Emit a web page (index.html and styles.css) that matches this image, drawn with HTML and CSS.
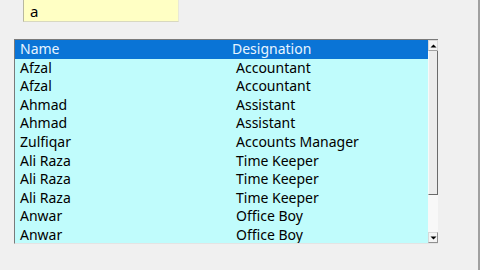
FILE: index.html
```html
<!DOCTYPE html>
<html>
<head>
<meta charset="utf-8">
<link rel="stylesheet" href="styles.css">
</head>
<body>
<div class="window">
  <div class="top">
    <div class="search">a</div>
  </div>
  <div class="listbox">
    <div class="list">
      <div class="row head"><span class="c1">Name</span><span class="c2">Designation</span></div>
      <div class="row"><span class="c1">Afzal</span><span class="c2">Accountant</span></div>
      <div class="row"><span class="c1">Afzal</span><span class="c2">Accountant</span></div>
      <div class="row"><span class="c1">Ahmad</span><span class="c2">Assistant</span></div>
      <div class="row"><span class="c1">Ahmad</span><span class="c2">Assistant</span></div>
      <div class="row"><span class="c1">Zulfiqar</span><span class="c2">Accounts Manager</span></div>
      <div class="row"><span class="c1">Ali Raza</span><span class="c2">Time Keeper</span></div>
      <div class="row"><span class="c1">Ali Raza</span><span class="c2">Time Keeper</span></div>
      <div class="row"><span class="c1">Ali Raza</span><span class="c2">Time Keeper</span></div>
      <div class="row"><span class="c1">Anwar</span><span class="c2">Office Boy</span></div>
      <div class="row"><span class="c1">Anwar</span><span class="c2">Office Boy</span></div>
    </div>
    <div class="scroll">
      <div class="arrow up"><svg width="7" height="4" viewBox="0 0 7 4"><path d="M0.5 3.5 L3.5 0.5 L6.5 3.5 Z" fill="#000"/></svg></div>
      <div class="thumb"></div>
      <div class="track"></div>
      <div class="arrow down"><svg width="7" height="4" viewBox="0 0 7 4"><path d="M0.5 0.5 L3.5 3.5 L6.5 0.5 Z" fill="#000"/></svg></div>
    </div>
  </div>
</div>
</body>
</html>
```
FILE: styles.css
```css
html, body {
  margin: 0;
  padding: 0;
  background: #f0f0f0;
}
.window {
  width: 478px;
  height: 270px;
  border-right: 2px solid #a0a0a0;
  box-sizing: content-box;
  font-family: "Noto Sans", "Open Sans", sans-serif;
  font-size: 14px;
  color: #000;
  overflow: hidden;
}
.top {
  height: 39px;
  padding-left: 23px;
}
.search {
  width: 156px;
  height: 22px;
  background: #ffffc4;
  border-left: 1px solid #b8b8a0;
  border-bottom: 1px solid #d8d8c0;
  border-right: 1px solid #e8e8d8;
  box-sizing: border-box;
  padding-left: 6px;
  line-height: 22px;
  font-size: 15px;
}
.listbox {
  margin-left: 14px;
  width: 424px;
  height: 205px;
  display: flex;
  border-top: 1px solid #7a7a7a;
  border-left: 1px solid #7a7a7a;
  border-bottom: 1px solid #e4e4e4;
  box-sizing: border-box;
}
.list {
  flex: 1;
  background: #c0fcfc;
  overflow: hidden;
}
.row {
  height: 18.6px;
  line-height: 18.6px;
  display: flex;
  white-space: nowrap;
}
.head {
  background: #0a74d6;
  color: #e8f4ff;
}
.c1 {
  width: 212px;
  padding-left: 5px;
}
.c2 {
  padding-left: 4px;
}
.head .c2 {
  padding-left: 0;
}
.scroll {
  width: 10px;
  display: flex;
  flex-direction: column;
  background: #f6f6f6;
}
.arrow {
  height: 11px;
  display: flex;
  align-items: center;
  justify-content: center;
  background: #f4f4f4;
  border: 1px solid #d8d8d8;
  box-sizing: border-box;
}
.up {
  border-bottom-color: #a0a0a0;
}
.thumb {
  height: 144px;
  background: #ececec;
  border-right: 1px solid #6a6a6a;
  border-bottom: 1px solid #6a6a6a;
  border-left: 1px solid #f8f8f8;
  box-sizing: border-box;
}
.track {
  flex: 1;
  background: #f8f8f8;
}
.down {
  border-right-color: #909090;
  border-bottom-color: #909090;
}
```
